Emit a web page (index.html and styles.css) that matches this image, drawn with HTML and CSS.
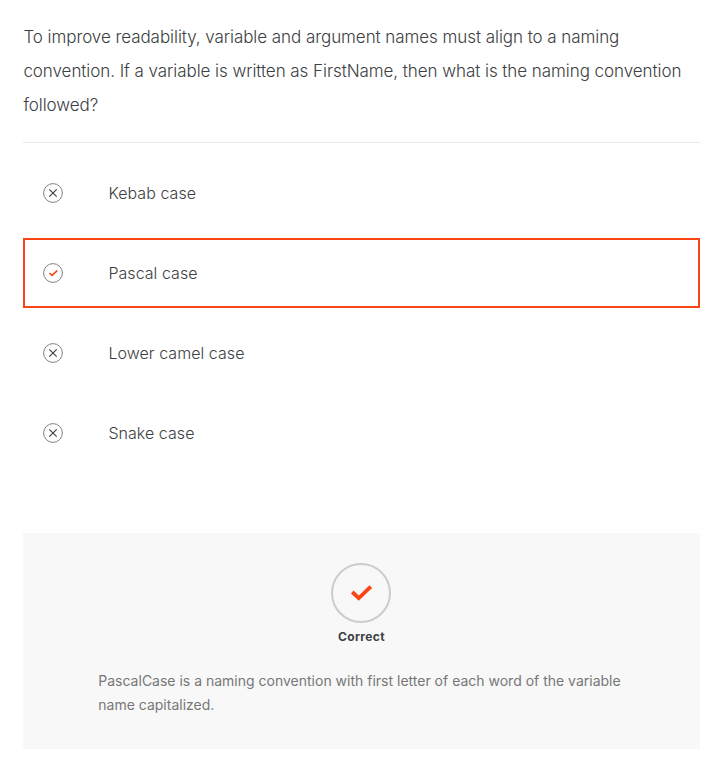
FILE: index.html
```html
<!DOCTYPE html>
<html lang="en">
<head>
<meta charset="utf-8">
<title>Quiz</title>
<link rel="stylesheet" href="styles.css">
</head>
<body>
<main class="quiz">
  <h1 class="question">To improve readability, variable and argument names must align to a naming convention. If a variable is written as FirstName, then what is the naming convention followed?</h1>
  <ul class="options">
    <li class="option"><svg class="mark" viewBox="0 0 20 20"><circle cx="10" cy="10" r="9.4"/><path d="M6.3 6.3l7.4 7.4M13.7 6.3l-7.4 7.4"/></svg><span>Kebab case</span></li>
    <li class="option selected"><svg class="mark" viewBox="0 0 20 20"><circle cx="10" cy="10" r="9.4"/><path class="tick" d="M6.6 10l2.5 2.4 5.2-4.9"/></svg><span>Pascal case</span></li>
    <li class="option"><svg class="mark" viewBox="0 0 20 20"><circle cx="10" cy="10" r="9.4"/><path d="M6.3 6.3l7.4 7.4M13.7 6.3l-7.4 7.4"/></svg><span>Lower camel case</span></li>
    <li class="option"><svg class="mark" viewBox="0 0 20 20"><circle cx="10" cy="10" r="9.4"/><path d="M6.3 6.3l7.4 7.4M13.7 6.3l-7.4 7.4"/></svg><span>Snake case</span></li>
  </ul>
  <section class="feedback">
    <svg class="badge" viewBox="0 0 60 60"><circle cx="30" cy="30" r="29"/><path d="M21.2 29l6.6 6.2 12-11.6"/></svg>
    <strong class="verdict">Correct</strong>
    <p class="explanation">PascalCase is a naming convention with first letter of each word of the variable name capitalized.</p>
  </section>
</main>
</body>
</html>
```
FILE: styles.css
```css
* { box-sizing: border-box; }
body { margin: 0; background: #fff; color: #3c4042; font-family: Inter, sans-serif; }
.quiz { width: 677px; margin-left: 23px; padding-top: 20px; }
.question { margin: 0; padding: 0 0 20px 0.4px; border-bottom: 1px solid #e9e9e9; font-size: 17px; line-height: 34px; font-weight: 350; letter-spacing: -0.06px; }
.options { list-style: none; margin: 15px 0 0; padding: 0; display: grid; gap: 10px; }
.option { display: flex; align-items: center; gap: 45.4px; height: 70px; padding-left: 18px; border: 2px solid transparent; font-size: 16px; font-weight: 350; letter-spacing: 0.05px; }
.selected { border-color: #fa4616; }
.mark { width: 20px; height: 20px; fill: none; stroke: #7d8082; stroke-width: 1; overflow: visible; }
.mark path { stroke: #3f4548; stroke-width: 1.2; }
.mark .tick { stroke: #fa4616; stroke-width: 1.7; }
.feedback { display: flex; flex-direction: column; align-items: center; height: 216px; margin-top: 65px; padding: 30px 75px 0; background: #f8f8f8; }
.badge { width: 60px; height: 60px; flex: none; margin-right: 1px; fill: none; stroke: #ccc; stroke-width: 2; }
.badge path { stroke: #fa4616; stroke-width: 3.8; }
.verdict { margin-top: 4px; color: #3c4042; font-size: 12px; line-height: 20px; font-weight: 650; letter-spacing: 0.4px; }
.explanation { align-self: stretch; margin: 22px 0 0; padding-left: 0.3px; color: #777; font-size: 14px; line-height: 24px; }
```
